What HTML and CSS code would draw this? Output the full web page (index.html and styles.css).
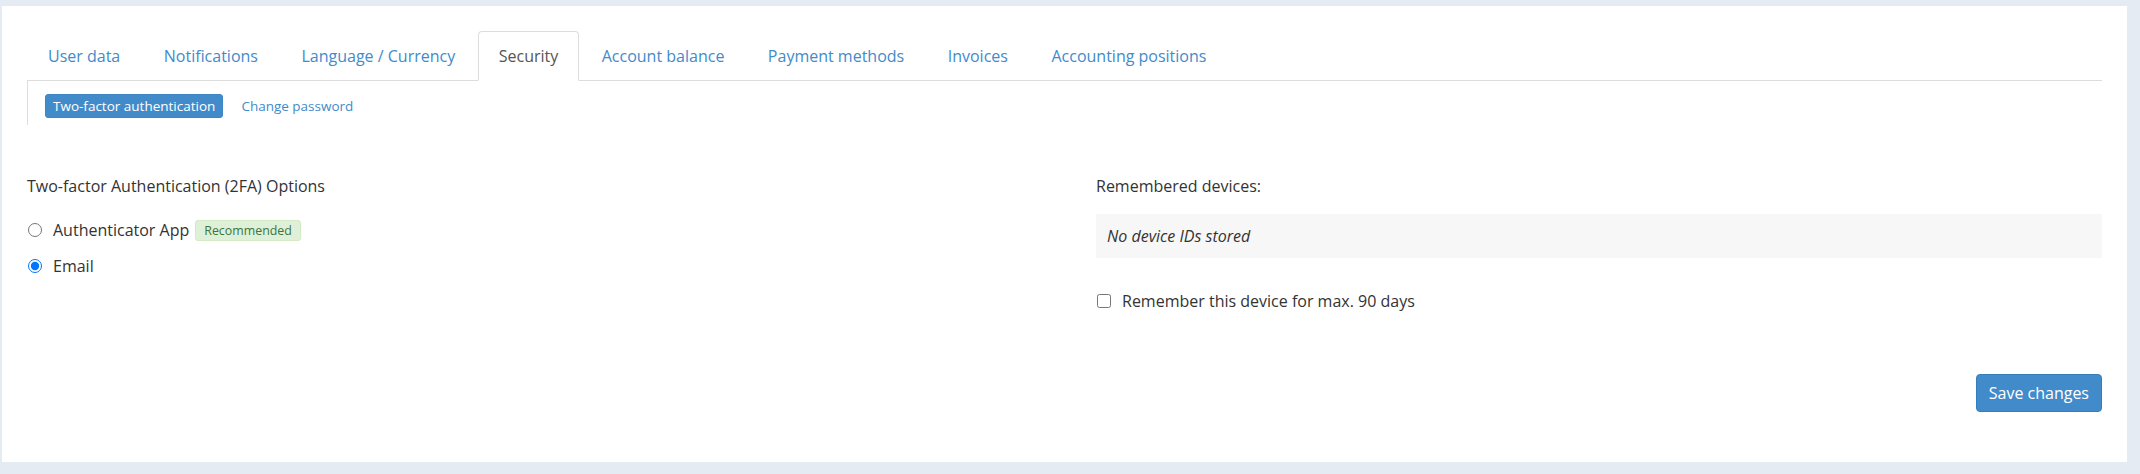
FILE: index.html
```html
<!DOCTYPE html>
<html lang="en">
<head>
<meta charset="utf-8">
<title>Security</title>
<link rel="stylesheet" href="styles.css">
</head>
<body>
<div class="panel">
  <ul class="tabs">
    <li><a href="#">User data</a></li>
    <li><a href="#">Notifications</a></li>
    <li><a href="#">Language / Currency</a></li>
    <li class="active"><a href="#">Security</a></li>
    <li><a href="#">Account balance</a></li>
    <li><a href="#">Payment methods</a></li>
    <li><a href="#">Invoices</a></li>
    <li><a href="#">Accounting positions</a></li>
  </ul>
  <div class="subtabs">
    <a href="#" class="pill active">Two-factor authentication</a>
    <a href="#" class="pill">Change password</a>
  </div>
  <form class="form-grid">
    <div class="col">
      <div class="heading">Two-factor Authentication (2FA) Options</div>
      <label class="choice">
        <input type="radio" name="tfa" class="radio">
        <span>Authenticator App</span>
        <span class="badge">Recommended</span>
      </label>
      <label class="choice">
        <input type="radio" name="tfa" class="radio" checked>
        <span>Email</span>
      </label>
    </div>
    <div class="col">
      <div class="heading">Remembered devices:</div>
      <div class="devices">No device IDs stored</div>
      <label class="check-row">
        <input type="checkbox" class="checkbox">
        <span>Remember this device for max. 90 days</span>
      </label>
    </div>
  </form>
  <div class="actions">
    <button type="button" class="btn-primary">Save changes</button>
  </div>
</div>
</body>
</html>
```

FILE: styles.css
```css
* {
  box-sizing: border-box;
}

html, body {
  margin: 0;
}

body {
  background: #e5ebf2;
  padding: 6px 13px 11px 2px;
  font-family: "Open Sans", "DejaVu Sans", sans-serif;
  font-size: 16px;
  color: #333;
}

.panel {
  background: #fff;
  padding: 25px 25px 50px;
}

.tabs {
  display: flex;
  list-style: none;
  margin: 0;
  padding: 0;
  border-bottom: 1px solid #ddd;
}

.tabs li {
  margin-right: 1.5px;
  margin-bottom: -1px;
}

.tabs a {
  display: block;
  padding: 13px 20px;
  line-height: 22px;
  border: 1px solid transparent;
  border-radius: 4px 4px 0 0;
  color: #428bca;
  text-decoration: none;
}

.tabs .active a {
  color: #555;
  background: #fff;
  border-color: #ddd #ddd #fff;
}

.subtabs {
  display: flex;
  gap: 10px;
  border-left: 1px solid #ddd;
  padding: 13px 17px 7px;
}

.pill {
  display: block;
  padding: 0 7px;
  line-height: 22px;
  font-size: 13.5px;
  border: 1px solid transparent;
  border-radius: 3px;
  color: #428bca;
  text-decoration: none;
}

.pill.active {
  background: #428bca;
  border-color: #3d85c4;
  color: #fff;
}

.form-grid {
  display: grid;
  grid-template-columns: 1fr 1fr;
  column-gap: 63px;
  margin: 50px 0 0;
}

.heading {
  line-height: 22px;
}

.col > .heading + .choice {
  margin-top: 15px;
}

.choice {
  display: flex;
  align-items: center;
  height: 36px;
}

.radio {
  width: 14px;
  height: 14px;
  margin: 0 11px 0 1px;
}

.badge {
  margin-left: 6px;
  padding: 0 8px;
  line-height: 19px;
  font-size: 12.4px;
  color: #3c763d;
  background: #dff0d8;
  border: 1px solid #d6e9c6;
  border-radius: 3px;
}

.devices {
  margin-top: 17px;
  background: #f7f7f7;
  padding: 11px 11px;
  line-height: 22px;
  font-style: italic;
}

.check-row {
  display: flex;
  align-items: center;
  margin-top: 32px;
  line-height: 22px;
}

.checkbox {
  width: 14px;
  height: 14px;
  margin: 0 11px 0 1px;
}

.actions {
  display: flex;
  justify-content: flex-end;
  margin-top: 62px;
}

.btn-primary {
  font-family: inherit;
  font-size: 16px;
  line-height: 20px;
  padding: 8px 12px;
  color: #fff;
  background: #428bca;
  border: 1px solid #357ebd;
  border-radius: 4px;
}
```
